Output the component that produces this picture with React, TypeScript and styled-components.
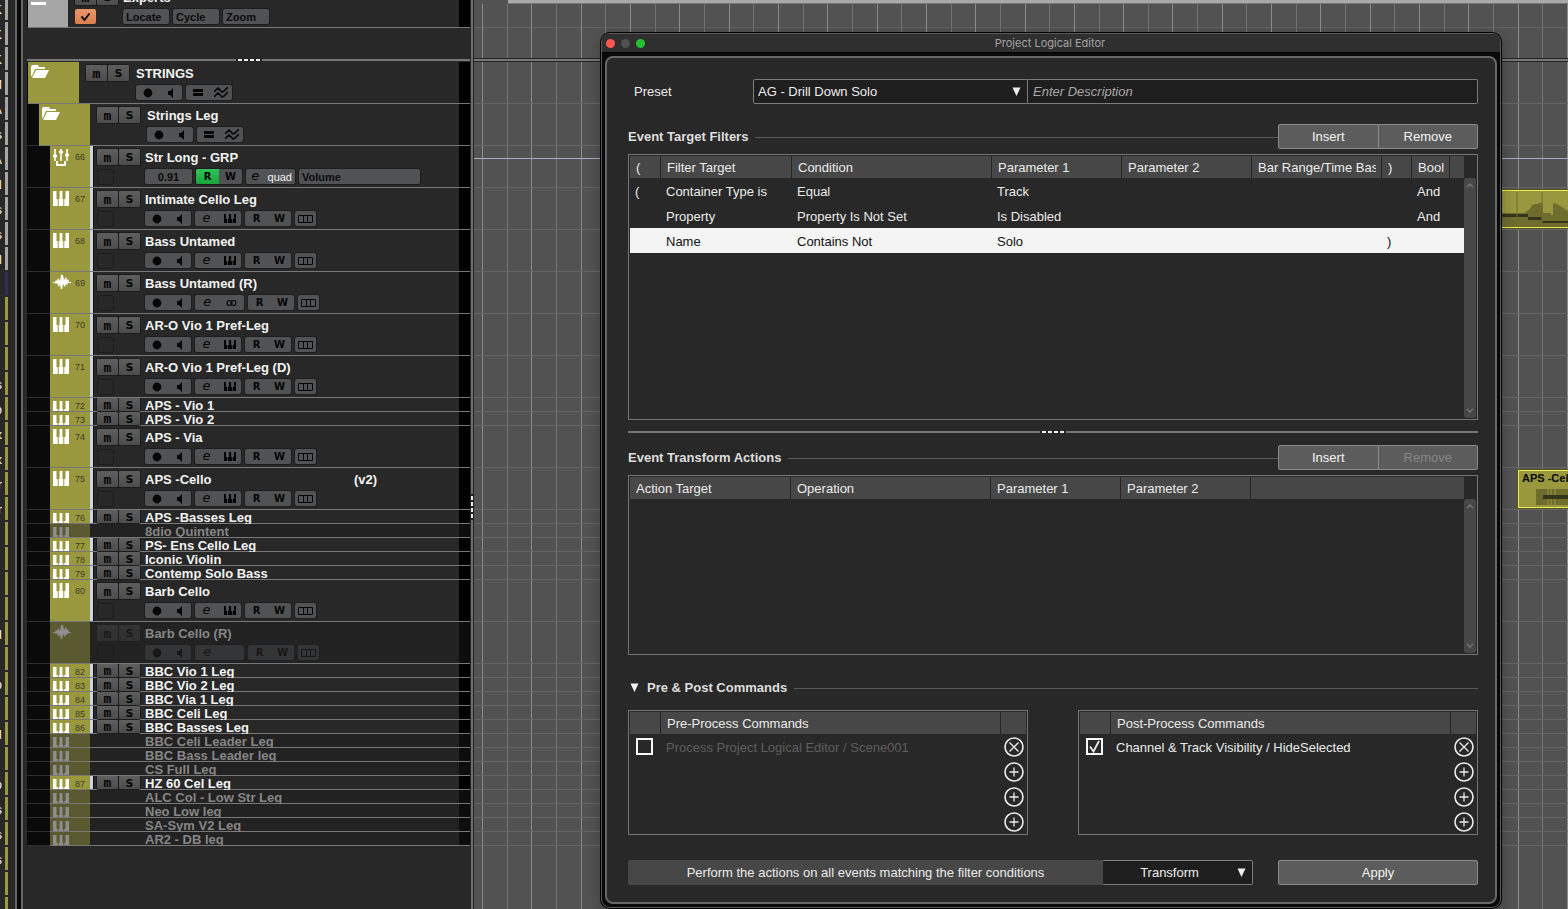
import React from 'react';
import styled, { createGlobalStyle, css } from 'styled-components';

const GlobalStyle = createGlobalStyle`
  *, *::before, *::after { box-sizing: border-box; }
  body {
    margin: 0;
    background: #282828;
    color: #ececec;
    font-family: "Liberation Sans", Arial, sans-serif;
    font-size: 13px;
  }
  button, input, select { font: inherit; color: inherit; margin: 0; }
  button { padding: 0; border: 0; background: none; }
`;

/* ---------- data ---------- */

type Kind = 'folder' | 'group' | 'keys' | 'audio';

interface Track {
  name: string;
  kind: Kind;
  no?: number;
  depth?: number;
  small?: boolean;
  off?: boolean;
  version?: string;
  clip?: 'long' | 'cello';
  line?: boolean;
}

const tracks: Track[] = [
  { name: 'STRINGS', kind: 'folder', depth: 0 },
  { name: 'Strings Leg', kind: 'folder', depth: 1 },
  { name: 'Str Long - GRP', kind: 'group', no: 66, line: true },
  { name: 'Intimate Cello Leg', kind: 'keys', no: 67, clip: 'long' },
  { name: 'Bass Untamed', kind: 'keys', no: 68 },
  { name: 'Bass Untamed (R)', kind: 'audio', no: 69 },
  { name: 'AR-O Vio 1 Pref-Leg', kind: 'keys', no: 70 },
  { name: 'AR-O Vio 1 Pref-Leg (D)', kind: 'keys', no: 71 },
  { name: 'APS - Vio 1', kind: 'keys', no: 72, small: true },
  { name: 'APS - Vio 2', kind: 'keys', no: 73, small: true },
  { name: 'APS - Via', kind: 'keys', no: 74 },
  { name: 'APS -Cello', kind: 'keys', no: 75, version: '(v2)', clip: 'cello' },
  { name: 'APS -Basses Leg', kind: 'keys', no: 76, small: true },
  { name: '8dio Quintent', kind: 'keys', small: true, off: true },
  { name: 'PS- Ens Cello Leg', kind: 'keys', no: 77, small: true },
  { name: 'Iconic Violin', kind: 'keys', no: 78, small: true },
  { name: 'Contemp Solo Bass', kind: 'keys', no: 79, small: true },
  { name: 'Barb Cello', kind: 'keys', no: 80 },
  { name: 'Barb Cello (R)', kind: 'audio', off: true },
  { name: 'BBC Vio 1 Leg', kind: 'keys', no: 82, small: true },
  { name: 'BBC Vio 2 Leg', kind: 'keys', no: 83, small: true },
  { name: 'BBC Via 1 Leg', kind: 'keys', no: 84, small: true },
  { name: 'BBC Celi Leg', kind: 'keys', no: 85, small: true },
  { name: 'BBC Basses Leg', kind: 'keys', no: 86, small: true },
  { name: 'BBC Celi Leader Leg', kind: 'keys', small: true, off: true },
  { name: 'BBC Bass Leader leg', kind: 'keys', small: true, off: true },
  { name: 'CS Full Leg', kind: 'keys', small: true, off: true },
  { name: 'HZ 60 Cel Leg', kind: 'keys', no: 87, small: true },
  { name: 'ALC Col - Low Str Leg', kind: 'keys', small: true, off: true },
  { name: 'Neo Low leg', kind: 'keys', small: true, off: true },
  { name: 'SA-Sym V2 Leg', kind: 'keys', small: true, off: true },
  { name: 'AR2 - DB leg', kind: 'keys', small: true, off: true },
];

const stripEnds: Record<number, string> = {
  0: 'K', 1: 'K', 2: 'K', 3: 'M', 4: 'A', 5: 's', 6: 'A', 7: 'N', 8: 's', 9: 's', 10: 'I',
  15: 's', 16: 'o', 17: 'x', 18: 'x', 19: 'r', 20: 'r', 25: 'l', 27: 'o', 29: 'H',
  31: 'o', 32: 's', 33: 's', 34: 's',
};

/* ---------- icons ---------- */

const KeysIcon = () => (
  <svg width="16" height="15" viewBox="0 0 16 15" fill="currentColor" aria-hidden="true">
    <path d="M0 0h3.500v8H4.700v7H0zM6.600 0h2.800v8h.9v7H5.700V8h.9zM12.500 0H16v15h-4.700V8h1.200z" />
  </svg>
);

const SmallKeysIcon = () => (
  <svg width="12" height="9" viewBox="0 0 12 9" fill="currentColor" aria-hidden="true">
    <path d="M0 0h2v5h1.300v4H0zM4.900 0h2.200v5h.9v4H4V5h.9zM10 0h2v9H8.700V5H10z" />
  </svg>
);

const FolderIcon = () => (
  <svg width="18" height="14" viewBox="0 0 18 14" fill="currentColor" aria-hidden="true">
    <path d="M0 2 1 0h6l1 2h6v2H4L1 11H0z" />
    <path d="M5 5h13l-4 8H1z" />
  </svg>
);

const MixerIcon = () => (
  <svg width="16" height="17" viewBox="0 0 16 17" fill="none" stroke="currentColor" strokeWidth="1.600" aria-hidden="true">
    <path d="M2 0v12M8 0v12M14 0v12" />
    <path d="M4 12v4h8v-4" strokeWidth="2" />
    <path d="M0 7h4M6 3h4M12 6h4" strokeWidth="2.500" />
  </svg>
);

const WaveIcon = () => (
  <svg width="18" height="14" viewBox="0 0 18 14" fill="currentColor" aria-hidden="true">
    <path d="M0 7h2l1-2 1 1 1-3 2 3 1-6h2l1 5 2-3 1 3 1-1 1 3h2v1h-3l-1 2-1-1-1 3-2-3-1 6H8L7 9l-1 3-2-4-1 1-1-1H0z" />
  </svg>
);

const RecordIcon = () => (
  <svg width="10" height="10" viewBox="0 0 10 10" fill="currentColor" aria-hidden="true"><circle cx="5" cy="5" r="4.400" /></svg>
);

const SpeakerIcon = () => (
  <svg width="8" height="10" viewBox="0 0 8 10" fill="currentColor" aria-hidden="true"><path d="M1 3h2l3-3v10L3 7H1z" /></svg>
);

const BarsIcon = () => (
  <svg width="10" height="7" viewBox="0 0 10 7" fill="currentColor" aria-hidden="true"><path d="M0 0h10v3H0zM0 4h10v3H0z" /></svg>
);

const ZigzagIcon = () => (
  <svg width="14" height="11" viewBox="0 0 14 11" fill="none" stroke="currentColor" strokeWidth="1.600" aria-hidden="true">
    <path d="M0 5l4-4 4 4 2-1 4-4M0 10l4-4 4 4 2-1 4-4" />
  </svg>
);

const RingsIcon = () => (
  <svg width="12" height="8" viewBox="0 0 12 8" fill="none" stroke="currentColor" strokeWidth="1.200" aria-hidden="true">
    <circle cx="3.500" cy="4" r="2.500" /><circle cx="7.500" cy="4" r="2.500" />
  </svg>
);

const LanesIcon = () => (
  <svg width="15" height="8" viewBox="0 0 15 8" fill="none" stroke="currentColor" aria-hidden="true">
    <path d="M.5.5h14v7H.5zM5.500 0v8M9.500 0v8" />
  </svg>
);

const TickIcon = ({ w = 11, sw = 2 }: { w?: number; sw?: number }) => (
  <svg width={w} height={w} viewBox="0 0 11 11" fill="none" stroke="currentColor" strokeWidth={sw} aria-hidden="true">
    <path d="M1.500 5.500l3 3.500 5-6.500" />
  </svg>
);

const BoxTickIcon = () => (
  <svg width="15" height="15" viewBox="0 0 15 15" fill="none" stroke="currentColor" strokeWidth="1.800" aria-hidden="true">
    <path d="M3 7.500l3.500 5L12 2" />
  </svg>
);

const Triangle = () => (
  <svg width="9" height="9" viewBox="0 0 9 9" fill="currentColor" aria-hidden="true"><path d="M.5.5h8L4.500 9z" /></svg>
);

const Chevron = ({ down }: { down?: boolean }) => (
  <svg width="8" height="6" viewBox="0 0 8 6" fill="none" stroke="currentColor" strokeWidth="1.500" aria-hidden="true">
    <path d={down ? 'M1 1l3 3 3-3' : 'M1 5l3-3 3 3'} />
  </svg>
);

const CircleIcon = ({ cross }: { cross?: boolean }) => (
  <svg width="20" height="20" viewBox="0 0 20 20" fill="none" stroke="currentColor" aria-hidden="true">
    <circle cx="10" cy="10" r="9" strokeWidth="1.600" />
    <path d={cross ? 'M5.500 5.500l9 9M14.500 5.500l-9 9' : 'M10 5.500v9M5.500 10h9'} strokeWidth="1.300" />
  </svg>
);

/* ---------- page frame ---------- */

const Page = styled.main`
  display: flex;
  height: 100vh;
  overflow: hidden;
`;

const EdgeStrip = styled.aside`
  flex: none;
  width: 15px;
  margin-top: -3px;
`;

const EdgeRow = styled.div`
  display: flex;
  gap: 3px;
  height: 25px;
`;

const EdgeText = styled.span`
  display: flex;
  justify-content: flex-end;
  width: 2px;
  overflow: hidden;
  line-height: 25px;
  color: #f4f4f4;
`;

const EdgeMark = styled.span<{ $tone: string }>`
  width: 3px;
  height: 23px;
  background: ${(p) => p.$tone};
`;

const FrameBar = styled.div`
  flex: none;
  width: 8px;
  margin-right: 4px;
  border: solid #666;
  border-width: 0 2px;
  background: #0a0a0a;
`;

const VerticalSplitter = styled.div`
  display: flex;
  flex: none;
  flex-direction: column;
  justify-content: center;
  width: 4px;
  padding: 105px 1px 0;
  background: linear-gradient(90deg, #222 1px, #6e6e6e 1px 3px, #222 3px);
`;

const HorizontalSplitter = styled.div`
  display: flex;
  justify-content: center;
  height: 2px;
  background: #777;
`;

const Grip = styled.div<{ $vertical?: boolean }>`
  display: flex;
  flex-direction: ${(p) => (p.$vertical ? 'column' : 'row')};
  gap: 2px;
  padding: ${(p) => (p.$vertical ? '2px 0' : '0 2px')};
  background: #222;
`;

const Dash = styled.span<{ $vertical?: boolean }>`
  width: ${(p) => (p.$vertical ? 2 : 4)}px;
  height: ${(p) => (p.$vertical ? 4 : 2)}px;
  background: #ececec;
`;

const GripDots = ({ vertical }: { vertical?: boolean }) => (
  <Grip $vertical={vertical}>
    {[0, 1, 2, 3].map((i) => <Dash key={i} $vertical={vertical} />)}
  </Grip>
);

/* ---------- track list ---------- */

const TrackPane = styled.section`
  flex: none;
  width: 443px;
`;

const TopTracks = styled.div`
  display: flex;
  flex-direction: column;
  justify-content: flex-end;
  height: 28px;
  margin-bottom: 31px;
  overflow: hidden;
`;

const TrackList = styled.div`
  padding-top: 1px;
`;

const TrackRow = styled.div<{ $small?: boolean; $off?: boolean }>`
  display: flex;
  flex: none;
  height: ${(p) => (p.$small ? 14 : 42)}px;
  overflow: hidden;
  background: ${(p) => (p.$off ? '#222' : '#282828')};
`;

const Indent = styled.div<{ $depth: number }>`
  flex: none;
  width: ${(p) => [1, 12, 23][p.$depth]}px;
  border-bottom: 1px solid #2e2e2e;
  background: #0a0a0a;
`;

const TrackBody = styled.div`
  display: flex;
  flex: 1;
  min-width: 0;
  border-bottom: 1px solid #777;
`;

const ColorBlock = styled.div<{ $tone: string; $wide?: boolean; $off?: boolean }>`
  display: flex;
  flex: none;
  justify-content: space-between;
  width: ${(p) => (p.$wide ? 51 : 40)}px;
  padding: 3px 5px 0 3px;
  overflow: hidden;
  background: ${(p) => p.$tone};
  color: ${(p) => (p.$off ? '#8e8e8e' : '#fff')};
  svg { flex: none; }
`;

const TrackNo = styled.span<{ $small?: boolean }>`
  height: 14px;
  margin-top: ${(p) => (p.$small ? -3 : 0)}px;
  line-height: 16px;
  font-size: 9px;
  color: #3e3e22;
`;

const SelectMark = styled.div<{ $on: boolean }>`
  flex: none;
  width: 4px;
  border-right: 1px solid ${(p) => (p.$on ? '#0c0c0c' : 'transparent')};
  background: ${(p) => (p.$on ? '#cdd5e4' : 'transparent')};
`;

const Switches = styled.div<{ $gap: number }>`
  flex: none;
  width: 43px;
  margin-left: ${(p) => p.$gap}px;
`;

const MuteSolo = styled.div<{ $small?: boolean; $off?: boolean }>`
  display: flex;
  gap: 1px;
  height: ${(p) => (p.$small ? 13 : 16)}px;
  margin-top: ${(p) => (p.$small ? 0 : 3)}px;
  border-radius: 2px;
  background: #1c1c1c;
  box-shadow: 0 0 0 1px #1c1c1c;
  opacity: ${(p) => (p.$off ? 0.3 : 1)};
`;

const LetterButton = styled.button<{ $round?: boolean }>`
  flex: 1;
  overflow: hidden;
  border-radius: 1px;
  background: linear-gradient(#5e5e5e, #4c4c4c);
  color: #060606;
  font: bold 11px/15px "DejaVu Sans", sans-serif;
  ${(p) => p.$round && css`font: bold 13px/13px "DejaVu Sans Mono", monospace;`}
`;

const MonitorBox = styled.div`
  width: 17px;
  height: 16px;
  margin-top: 4px;
  border: 1px solid #1c1c1c;
  border-radius: 3px;
`;

const Details = styled.div<{ $gap: number }>`
  flex: 1;
  min-width: 0;
  margin-left: ${(p) => p.$gap}px;
`;

const NameLine = styled.div<{ $small?: boolean; $off?: boolean }>`
  display: flex;
  height: ${(p) => (p.$small ? 15 : 23)}px;
  line-height: ${(p) => (p.$small ? 15 : 23)}px;
  font-weight: bold;
  white-space: nowrap;
  color: ${(p) => (p.$off ? '#868686' : '#f4f4f4')};
`;

const TrackName = styled.span`
  flex: none;
  width: 209px;
`;

const ControlLine = styled.div<{ $off?: boolean }>`
  display: flex;
  gap: 4px;
  opacity: ${(p) => (p.$off ? 0.4 : 1)};
`;

const Group = styled.div<{ $w: number }>`
  display: flex;
  flex: none;
  width: ${(p) => p.$w}px;
  height: 15px;
  overflow: hidden;
  border-radius: 2px;
  background: #505254;
  box-shadow: 0 0 0 1px #1e1e1e;
`;

const IconButton = styled.button<{ $lit?: boolean }>`
  display: flex;
  flex: 1;
  align-items: center;
  justify-content: center;
  height: 15px;
  background: ${(p) => (p.$lit ? 'linear-gradient(#2fc455, #18a53c)' : 'transparent')};
  color: #060606;
  font: bold 10px/15px "DejaVu Sans", sans-serif;
`;

const EditButton = styled(IconButton)`
  padding-bottom: 2px;
  font: italic 13px/13px "DejaVu Sans", sans-serif;
`;

const TextButton = styled.button<{ $light?: boolean; $left?: boolean }>`
  flex: 1;
  padding: 0 3px;
  text-align: ${(p) => (p.$left ? 'left' : 'center')};
  font-size: 11px;
  font-weight: ${(p) => (p.$light ? 'normal' : 'bold')};
  line-height: 16px;
  color: ${(p) => (p.$light ? '#f0f0f0' : '#0c0c0c')};
`;

const OrangeCheck = styled.button`
  display: flex;
  align-items: center;
  justify-content: center;
  width: 21px;
  height: 15px;
  margin-top: 4px;
  border-radius: 2px;
  background: linear-gradient(#e8956a, #d9804f);
  color: #111;
`;

const Meter = styled.div<{ $off?: boolean }>`
  flex: none;
  width: 11px;
  background: ${(p) => (p.$off ? '#0d0d0d' : '#000')};
`;

const MsButtons = ({ small, off }: { small?: boolean; off?: boolean }) => (
  <MuteSolo $small={small} $off={off}>
    <LetterButton $round aria-label="Mute">m</LetterButton>
    <LetterButton aria-label="Solo">S</LetterButton>
  </MuteSolo>
);

const RecordGroup = () => (
  <Group $w={46}>
    <IconButton aria-label="Record enable"><RecordIcon /></IconButton>
    <IconButton aria-label="Monitor"><SpeakerIcon /></IconButton>
  </Group>
);

const ReadWriteGroup = ({ lit }: { lit?: boolean }) => (
  <Group $w={46}>
    <IconButton $lit={lit} aria-label="Read automation">R</IconButton>
    <IconButton aria-label="Write automation">W</IconButton>
  </Group>
);

const Controls = ({ track }: { track: Track }) => {
  if (track.kind === 'folder') {
    return (
      <ControlLine>
        <RecordGroup />
        <Group $w={46}>
          <IconButton aria-label="Group editing"><BarsIcon /></IconButton>
          <IconButton aria-label="Show data"><ZigzagIcon /></IconButton>
        </Group>
      </ControlLine>
    );
  }
  if (track.kind === 'group') {
    return (
      <ControlLine>
        <Group $w={47}><TextButton aria-label="Volume value">0.91</TextButton></Group>
        <ReadWriteGroup lit />
        <Group $w={49}>
          <EditButton aria-label="Edit channel">e</EditButton>
          <TextButton $light>quad</TextButton>
        </Group>
        <Group $w={121}><TextButton $left>Volume</TextButton></Group>
      </ControlLine>
    );
  }
  return (
    <ControlLine $off={track.off}>
      <RecordGroup />
      <Group $w={track.kind === 'audio' ? 49 : 46}>
        <EditButton aria-label="Edit channel">e</EditButton>
        <IconButton aria-label="Instrument">
          {track.kind === 'keys' && <SmallKeysIcon />}
          {track.kind === 'audio' && !track.off && <RingsIcon />}
        </IconButton>
      </Group>
      <ReadWriteGroup />
      <Group $w={21}><IconButton aria-label="Lanes"><LanesIcon /></IconButton></Group>
    </ControlLine>
  );
};

const kindIcons: Record<Kind, React.ReactElement> = {
  folder: <FolderIcon />,
  group: <MixerIcon />,
  keys: <KeysIcon />,
  audio: <WaveIcon />,
};

const TrackItem = ({ track }: { track: Track }) => {
  const folder = track.kind === 'folder';
  return (
    <TrackRow $small={track.small} $off={track.off}>
      <Indent $depth={track.depth ?? 2} />
      <TrackBody>
        <ColorBlock $wide={folder} $off={track.off} $tone={track.off ? '#5b5930' : '#99983f'}>
          {kindIcons[track.kind]}
          {track.no && <TrackNo $small={track.small}>{track.no}</TrackNo>}
        </ColorBlock>
        {!folder && <SelectMark $on={!track.off} />}
        <Switches $gap={folder ? 7 : 3}>
          {!(track.small && track.off) && <MsButtons small={track.small} off={track.off} />}
          {!track.small && !folder && <MonitorBox />}
        </Switches>
        <Details $gap={folder ? 7 : 5}>
          <NameLine $small={track.small} $off={track.off}>
            <TrackName>{track.name}</TrackName>
            {track.version}
          </NameLine>
          {!track.small && <Controls track={track} />}
        </Details>
        <Meter $off={track.off} />
      </TrackBody>
    </TrackRow>
  );
};

const MarkerTrack = () => (
  <TrackRow>
    <Indent $depth={0} />
    <TrackBody>
      <ColorBlock $tone="#a6a6a6">
        <svg width="16" height="17" viewBox="0 0 16 17" fill="currentColor" aria-hidden="true"><path d="M0 13h15v3H0z" /></svg>
      </ColorBlock>
      <Switches $gap={7}>
        <MsButtons />
        <OrangeCheck aria-label="Active"><TickIcon /></OrangeCheck>
      </Switches>
      <Details $gap={5}>
        <NameLine><TrackName>Experts</TrackName></NameLine>
        <ControlLine>
          <Group $w={46}><TextButton $left>Locate</TextButton></Group>
          <Group $w={46}><TextButton $left>Cycle</TextButton></Group>
          <Group $w={46}><TextButton $left>Zoom</TextButton></Group>
        </ControlLine>
      </Details>
      <Meter />
    </TrackBody>
  </TrackRow>
);

/* ---------- arrangement ---------- */

const Arrange = styled.section`
  position: relative;
  flex: 1;
  min-width: 0;
  background: #525252;
`;

const GridLines = styled.svg`
  position: absolute;
  inset: 4px 0 0;
  width: 100%;
  height: 100%;
`;

const Ruler = styled.div`
  height: 28px;
  border-bottom: 1px solid #646464;
`;

const RulerBar = styled.div`
  height: 4px;
  margin-left: 34px;
  border-bottom: 1px solid #787878;
  background: #a8a8a8;
`;

const ArrangeSplit = styled.div`
  position: relative;
  height: 4px;
  margin-top: 30px;
  border: solid #222;
  border-width: 1px 0;
  background: #777;
`;

const Lane = styled.div<{ $small?: boolean }>`
  position: relative;
  height: ${(p) => (p.$small ? 14 : 42)}px;
  border-bottom: 1px solid #666;
`;

const AutomationLine = styled.div`
  position: relative;
  border-top: 12px solid transparent;
  height: 13px;
  background: #a3aec0;
  background-clip: padding-box;
`;

const Clip = styled.div<{ $w: number }>`
  position: absolute;
  top: 2px;
  right: 0;
  width: ${(p) => p.$w}px;
  height: 38px;
  padding: 1px 3px;
  overflow: hidden;
  border: 1px solid #e9e857;
  border-right: 0;
  outline: 1px solid #55551e;
  background: #99983f;
  color: #080808;
  font-size: 11px;
  font-weight: bold;
  white-space: nowrap;
  svg { position: absolute; right: 0; bottom: 0; z-index: 0; }
  span { position: relative; z-index: 1; }
`;

const GRID_STEP = 24.66;

const ArrangeView = () => (
  <Arrange>
    <GridLines aria-hidden="true" shapeRendering="crispEdges">
      {Array.from({ length: 100 }, (_, i) => (
        <rect key={i} x={Math.round(8 + i * GRID_STEP)} y="0" width="1" height="100%" fill={i % 2 ? '#747474' : '#8c8c8c'} />
      ))}
    </GridLines>
    <Ruler><RulerBar /></Ruler>
    <ArrangeSplit />
    {tracks.map((t) => (
      <Lane key={t.name} $small={t.small}>
        {t.line && <AutomationLine />}
        {t.clip === 'long' && (
          <Clip $w={90}>
            <svg width="66" height="35" viewBox="0 0 66 35" aria-hidden="true">
              <path d="M0 21h22l6-4 2-4h2v-1h4v-1h5v10h8v2h2V11l4 1 11 7v16H0z" fill="#6e6d2e" />
              <path d="M0 22h26v3h14v4h26v2H40v-3H26v-3H0z" fill="#35351a" />
              <path d="M15 0v37M40 0v37" stroke="#6e6d2e" />
            </svg>
          </Clip>
        )}
        {t.clip === 'cello' && (
          <Clip $w={50}>
            <svg width="32" height="20" viewBox="0 0 32 20" aria-hidden="true">
              <path d="M0 2h32v16H0z" fill="#6e6d2e" />
              <path d="M12 0v18M15 0v18M19 0v18" stroke="#99983f" />
              <path d="M7 8h25v4H7z" fill="#35351a" />
            </svg>
            <span>APS -Cello</span>
          </Clip>
        )}
      </Lane>
    ))}
    <LogicalEditor />
  </Arrange>
);

/* ---------- dialog ---------- */

const Dialog = styled.div`
  position: absolute;
  top: 33px;
  left: 127px;
  right: 67px;
  z-index: 2;
  overflow: hidden;
  border: 1px solid #5a5a5a;
  border-radius: 9px;
  background: #0a0a0a;
  box-shadow: 0 0 0 1px #000, 0 4px 14px rgba(0, 0, 0, 0.3);
`;

const TitleBar = styled.header`
  display: grid;
  grid-template-columns: 1fr auto 1fr;
  align-items: center;
  height: 19px;
  padding: 0 6px 0 4px;
  border-bottom: 1px solid #000;
  background: #2f2f2f;
`;

const Lights = styled.div`
  display: flex;
  gap: 6px;
`;

const Light = styled.button<{ $tone: string }>`
  width: 9px;
  height: 9px;
  border-radius: 50%;
  background: ${(p) => p.$tone};
`;

const DialogTitle = styled.h1`
  margin: 0;
  font: normal 11px/16px Inter, sans-serif;
  color: #a4a4a4;
`;

const Panel = styled.div`
  margin: 3px;
  padding: 21px 17px 17px 21px;
  border: 2px solid #676767;
  border-radius: 8px;
  background: #282828;
`;

const PresetRow = styled.div`
  display: flex;
  align-items: center;
  margin-bottom: 20px;
`;

const PresetLabel = styled.label`
  width: 125px;
  padding-left: 6px;
`;

const fieldBox = css`
  width: 100%;
  height: 25px;
  border: 1px solid #7c7c7c;
  background: #1e1e1e;
  outline: 0;
`;

const SelectWrap = styled.div<{ $w: number }>`
  position: relative;
  flex: none;
  width: ${(p) => p.$w}px;
  svg { position: absolute; top: 8px; right: 7px; pointer-events: none; }
`;

const Select = styled.select<{ $center?: boolean }>`
  ${fieldBox}
  padding: 0 20px 0 4px;
  appearance: none;
  border-radius: 2px 0 0 2px;
  ${(p) => p.$center && css`
    border-left: 0;
    border-radius: 0 2px 2px 0;
    text-align-last: center;
  `}
`;

const Description = styled.input`
  ${fieldBox}
  flex: 1;
  min-width: 0;
  padding: 0 5px;
  border-left: 0;
  border-radius: 0 2px 2px 0;
  &::placeholder { color: #a8a8a8; font-style: italic; opacity: 1; }
`;

const SectionHead = styled.div<{ $tight?: boolean }>`
  display: flex;
  align-items: center;
  height: 25px;
  margin-bottom: ${(p) => (p.$tight ? 5 : 10)}px;
`;

const PrePostHead = styled(SectionHead)`
  margin-top: 20px;
`;

const SectionTitle = styled.h2`
  margin: 0 7px 0 0;
  font-size: 13px;
  line-height: 25px;
  color: #dedede;
`;

const FoldButton = styled.button`
  display: flex;
  width: 19px;
  padding-left: 2px;
  color: #f4f4f4;
`;

const Rule = styled.span`
  flex: 1;
  height: 1px;
  margin-top: 2px;
  background: #585858;
`;

const ButtonPair = styled.div`
  display: flex;
  width: 200px;
`;

const PushButton = styled.button<{ $w?: number }>`
  flex: ${(p) => (p.$w ? 'none' : 1)};
  width: ${(p) => (p.$w ? `${p.$w}px` : 'auto')};
  height: 25px;
  border: 1px solid #8a8a8a;
  border-radius: 2px;
  background: #5c5c5c;
  color: #f4f4f4;
  &:disabled { color: #868686; }
  ${ButtonPair} &:first-child { border-radius: 2px 0 0 2px; }
  ${ButtonPair} &:last-child { border-left: 0; border-radius: 0 2px 2px 0; }
`;

const ListBox = styled.div<{ $h: number }>`
  display: flex;
  min-height: ${(p) => p.$h}px;
  padding: 1px 1px 0;
  border: 1px solid #747474;
`;

const ListMain = styled.div`
  flex: 1;
  min-width: 0;
`;

const Table = styled.table`
  width: 100%;
  border-collapse: separate;
  border-spacing: 0;
  table-layout: fixed;
`;

const Th = styled.th`
  height: 22px;
  padding: 0 5px 0 6px;
  border-right: 1px solid #262626;
  background: #474747;
  font-weight: normal;
  text-align: left;
  white-space: nowrap;
  &:last-child { border-right: 0; }
`;

const ThText = styled.span`
  display: block;
  overflow: hidden;
`;

const Tr = styled.tr<{ $selected?: boolean }>`
  background: ${(p) => (p.$selected ? '#f4f4f4' : 'transparent')};
  color: ${(p) => (p.$selected ? '#111' : '#ececec')};
`;

const Td = styled.td<{ $dim?: boolean; $center?: boolean }>`
  height: 25px;
  padding: ${(p) => (p.$center ? 0 : '2px 0 0 5px')};
  overflow: hidden;
  white-space: nowrap;
  text-align: ${(p) => (p.$center ? 'center' : 'left')};
  color: ${(p) => (p.$dim ? '#5e5e5e' : 'inherit')};
`;

const CheckCell = styled(Td)`
  padding: 0 0 0 6px;
`;

const ScrollBar = styled.div`
  display: flex;
  flex: none;
  flex-direction: column;
  justify-content: space-between;
  align-items: center;
  width: 12px;
  margin: 22px 0 1px;
  padding: 4px 0;
  border-radius: 3px;
  background: #474747;
  color: #767676;
`;

const DialogSplitter = styled(HorizontalSplitter)`
  margin: 11px 0 12px;
`;

const CommandLists = styled.div`
  display: grid;
  grid-template-columns: 1fr 1fr;
  gap: 50px;
  margin-bottom: 25px;
`;

const CheckWrap = styled.span`
  position: relative;
  display: flex;
  width: 17px;
  height: 17px;
  svg { position: absolute; top: 1px; left: 1px; pointer-events: none; }
`;

const CheckBox = styled.input`
  appearance: none;
  width: 17px;
  height: 17px;
  border: 2px solid #f8f8f8;
`;

const RoundButton = styled.button`
  display: flex;
  margin: 0 auto;
  color: #ececec;
`;

const Footer = styled.div`
  display: flex;
`;

const FooterText = styled.div`
  flex: 1;
  border-radius: 2px 0 0 2px;
  background: #474747;
  line-height: 25px;
  text-align: center;
`;

const FooterSelect = styled(SelectWrap)`
  margin-right: 25px;
`;

const Bars = () => (
  <ScrollBar><Chevron /><Chevron down /></ScrollBar>
);

const Cols = ({ widths }: { widths: (number | null)[] }) => (
  <colgroup>
    {widths.map((w, i) => <col key={i} width={w ?? undefined} />)}
  </colgroup>
);

const HeadRow = ({ labels }: { labels: string[] }) => (
  <thead>
    <tr>{labels.map((l, i) => <Th key={i}><ThText>{l}</ThText></Th>)}</tr>
  </thead>
);

const filterHeads = [
  '(', 'Filter Target', 'Condition', 'Parameter 1', 'Parameter 2', 'Bar Range/Time Base', ')', 'Bool', '',
];

const filters = [
  ['(', 'Container Type is', 'Equal', 'Track', '', '', '', 'And', ''],
  ['', 'Property', 'Property Is Not Set', 'Is Disabled', '', '', '', 'And', ''],
  ['', 'Name', 'Contains Not', 'Solo', '', '', ')', '', ''],
];

const CommandList = ({ title, command, on }: { title: string; command: string; on?: boolean }) => (
  <ListBox $h={125}>
    <ListMain>
      <Table>
        <Cols widths={[31, null, 25]} />
        <HeadRow labels={['', title, '']} />
        <tbody>
          <Tr>
            <CheckCell>
              <CheckWrap>
                <CheckBox type="checkbox" defaultChecked={on} aria-label={command} />
                {on && <BoxTickIcon />}
              </CheckWrap>
            </CheckCell>
            <Td $dim={!on}>{command}</Td>
            <Td $center><RoundButton aria-label="Clear"><CircleIcon cross /></RoundButton></Td>
          </Tr>
          {[1, 2, 3].map((i) => (
            <Tr key={i}>
              <Td /><Td />
              <Td $center><RoundButton aria-label="Add"><CircleIcon /></RoundButton></Td>
            </Tr>
          ))}
        </tbody>
      </Table>
    </ListMain>
  </ListBox>
);

const LogicalEditor = () => (
  <Dialog role="dialog" aria-labelledby="dialog-title">
    <TitleBar>
      <Lights>
        <Light $tone="#ff5650" aria-label="Close" />
        <Light $tone="#505050" aria-label="Minimise" />
        <Light $tone="#24c138" aria-label="Zoom window" />
      </Lights>
      <DialogTitle id="dialog-title">Project Logical Editor</DialogTitle>
    </TitleBar>
    <Panel>
      <PresetRow>
        <PresetLabel htmlFor="preset">Preset</PresetLabel>
        <SelectWrap $w={275}>
          <Select id="preset"><option>AG - Drill Down Solo</option></Select>
          <Triangle />
        </SelectWrap>
        <Description placeholder="Enter Description" aria-label="Description" />
      </PresetRow>

      <SectionHead $tight>
        <SectionTitle>Event Target Filters</SectionTitle>
        <Rule />
        <ButtonPair>
          <PushButton>Insert</PushButton>
          <PushButton>Remove</PushButton>
        </ButtonPair>
      </SectionHead>
      <ListBox $h={266}>
        <ListMain>
          <Table>
            <Cols widths={[31, 131, null, 130, 130, 130, 30, 38, 14]} />
            <HeadRow labels={filterHeads} />
            <tbody>
              {filters.map((row, r) => (
                <Tr key={r} $selected={r === 2}>
                  {row.map((cell, c) => <Td key={c}>{cell}</Td>)}
                </Tr>
              ))}
            </tbody>
          </Table>
        </ListMain>
        <Bars />
      </ListBox>

      <DialogSplitter><GripDots /></DialogSplitter>

      <SectionHead $tight>
        <SectionTitle>Event Transform Actions</SectionTitle>
        <Rule />
        <ButtonPair>
          <PushButton>Insert</PushButton>
          <PushButton disabled>Remove</PushButton>
        </ButtonPair>
      </SectionHead>
      <ListBox $h={180}>
        <ListMain>
          <Table>
            <Cols widths={[161, 200, 130, 130, null]} />
            <HeadRow labels={['Action Target', 'Operation', 'Parameter 1', 'Parameter 2', '']} />
          </Table>
        </ListMain>
        <Bars />
      </ListBox>

      <PrePostHead>
        <FoldButton aria-label="Fold commands"><Triangle /></FoldButton>
        <SectionTitle>Pre &amp; Post Commands</SectionTitle>
        <Rule />
      </PrePostHead>
      <CommandLists>
        <CommandList title="Pre-Process Commands" command="Process Project Logical Editor / Scene001" />
        <CommandList title="Post-Process Commands" command="Channel & Track Visibility / HideSelected" on />
      </CommandLists>

      <Footer>
        <FooterText>Perform the actions on all events matching the filter conditions</FooterText>
        <FooterSelect $w={150}>
          <Select $center aria-label="Action"><option>Transform</option></Select>
          <Triangle />
        </FooterSelect>
        <PushButton $w={200}>Apply</PushButton>
      </Footer>
    </Panel>
  </Dialog>
);

/* ---------- page ---------- */

const edgeTone = (i: number) => (i < 11 ? '#a6a6a6' : i === 11 ? '#332a5e' : '#99983f');

export default function App() {
  return (
    <Page>
      <GlobalStyle />
      <EdgeStrip>
        {Array.from({ length: 60 }, (_, i) => (
          <EdgeRow key={i}>
            <EdgeText>{stripEnds[i]}</EdgeText>
            <EdgeMark $tone={edgeTone(i)} />
          </EdgeRow>
        ))}
      </EdgeStrip>
      <FrameBar />
      <TrackPane>
        <TopTracks><MarkerTrack /></TopTracks>
        <HorizontalSplitter><GripDots /></HorizontalSplitter>
        <TrackList>
          {tracks.map((t) => <TrackItem key={t.name} track={t} />)}
        </TrackList>
      </TrackPane>
      <VerticalSplitter><GripDots vertical /></VerticalSplitter>
      <ArrangeView />
    </Page>
  );
}
